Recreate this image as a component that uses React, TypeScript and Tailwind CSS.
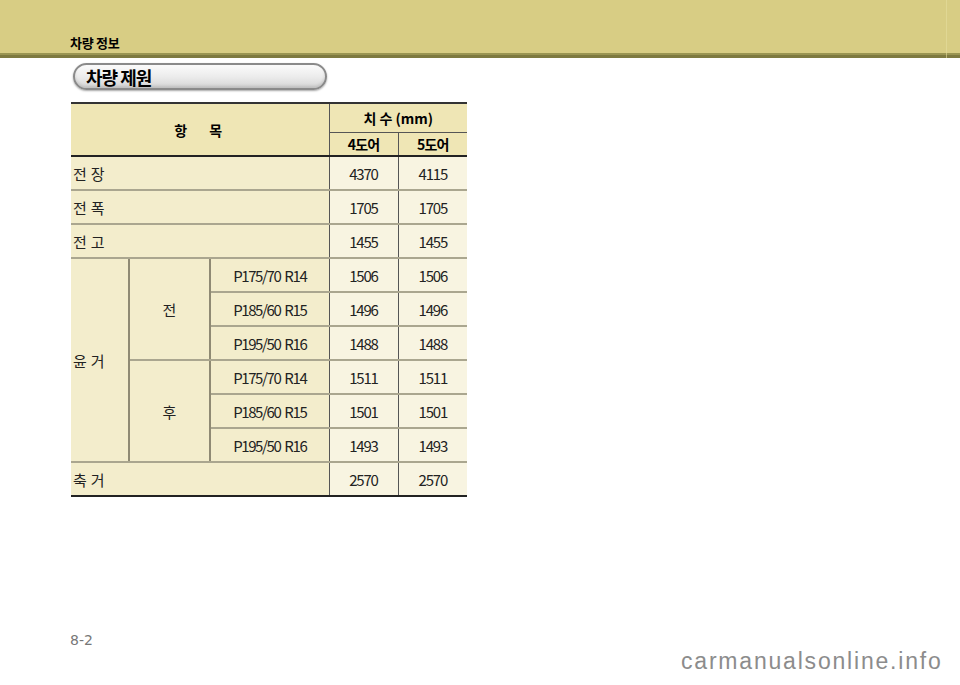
const font = "font-['Noto_Sans_CJK_KR','Noto_Sans',sans-serif]";

const front = [
  { tire: "P175/70 R14", a: "1506", b: "1506" },
  { tire: "P185/60 R15", a: "1496", b: "1496" },
  { tire: "P195/50 R16", a: "1488", b: "1488" },
];
const rear = [
  { tire: "P175/70 R14", a: "1511", b: "1511" },
  { tire: "P185/60 R15", a: "1501", b: "1501" },
  { tire: "P195/50 R16", a: "1493", b: "1493" },
];

const rowLine = "border-b-2 border-[#aaa68f]";
const leftBg = "bg-[#f3edcc]";
const numBg = "bg-[#f8f4e1]";
const num = "text-center text-[15px] tracking-[-1.2px]";
const kor = "pl-[2px] text-left text-[15px] tracking-[4px]";

function SimpleRow({ label, a, b, last }: { label: string; a: string; b: string; last?: boolean }) {
  const line = last ? "border-b-2 border-[#222]" : rowLine;
  return (
    <tr className="h-[34px]">
      <td colSpan={3} className={`${leftBg} ${line} border-r border-r-[#555] ${kor}`}>
        {label}
      </td>
      <td className={`${numBg} ${line} border-r border-r-[#555] ${num}`}>{a}</td>
      <td className={`${numBg} ${line} ${num}`}>{b}</td>
    </tr>
  );
}

export default function App() {
  return (
    <div className={`w-[960px] h-[685px] bg-white relative overflow-hidden ${font}`}>
      <div className="h-[53px] bg-[#d8cd84] flex items-end pl-[70px] pb-[4px]">
        <span className="text-[13px] font-bold text-black leading-none tracking-[-0.3px]">차량 정보</span>
      </div>
      <div className="h-[2px] bg-[#9a9552]" />
      <div className="h-[3px] bg-[#7e7a40]" />
      <div className="absolute top-0 left-[946px] w-px h-[58px] bg-[#e6dd9e] opacity-60" />

      <div className="ml-[73px] mt-[5px] w-[254px] h-[27px] rounded-full border-2 border-[#8a8a8a] bg-gradient-to-b from-[#fbfbfb] via-[#ececec] to-[#d6d6d6] shadow-[0_1px_2px_rgba(0,0,0,0.35),inset_0_-2px_3px_rgba(0,0,0,0.12)] flex items-center pl-[11px]">
        <span className="text-[18px] font-bold text-black leading-none tracking-[-1px]">차량 제원</span>
      </div>

      <table className="ml-[71px] mt-[12px] w-[396px] table-fixed border-collapse text-[13px] text-[#222] leading-none">
        <colgroup>
          <col className="w-[58px]" />
          <col className="w-[81px]" />
          <col className="w-[119px]" />
          <col className="w-[69px]" />
          <col className="w-[69px]" />
        </colgroup>
        <thead>
          <tr className="h-[29px]">
            <th
              colSpan={3}
              rowSpan={2}
              className="bg-[#efe6b5] border-t-2 border-t-[#333] border-b-2 border-b-[#222] border-r border-r-[#555] font-bold text-black text-[14px]"
            >
              <span className="inline-flex gap-[22px] -ml-[3px]">
                <span>항</span>
                <span>목</span>
              </span>
            </th>
            <th colSpan={2} className="bg-[#efe6b5] border-t-2 border-t-[#333] border-b border-b-[#555] font-bold text-black text-[14px]">
              치 수 (mm)
            </th>
          </tr>
          <tr className="h-[24px]">
            <th className="bg-[#efe6b5] border-b-2 border-b-[#222] border-r border-r-[#555] font-bold text-black text-[14px] tracking-[-0.8px]">4도어</th>
            <th className="bg-[#efe6b5] border-b-2 border-b-[#222] font-bold text-black text-[14px] tracking-[-0.8px]">5도어</th>
          </tr>
        </thead>
        <tbody>
          <SimpleRow label="전장" a="4370" b="4115" />
          <SimpleRow label="전폭" a="1705" b="1705" />
          <SimpleRow label="전고" a="1455" b="1455" />
          {[...front, ...rear].map((r, i) => (
            <tr key={i} className="h-[34px]">
              {i === 0 && (
                <td rowSpan={6} className={`${leftBg} ${rowLine} border-r-2 border-r-[#8f8a74] ${kor}`}>
                  윤거
                </td>
              )}
              {(i === 0 || i === 3) && (
                <td rowSpan={3} className={`${leftBg} ${rowLine} border-r-2 border-r-[#8f8a74] text-center text-[15px]`}>
                  {i === 0 ? "전" : "후"}
                </td>
              )}
              <td className={`${leftBg} ${rowLine} border-r border-r-[#555] text-center text-[15px] tracking-[-1.4px] [word-spacing:2px]`}>{r.tire}</td>
              <td className={`${numBg} ${rowLine} border-r border-r-[#555] ${num}`}>{r.a}</td>
              <td className={`${numBg} ${rowLine} ${num}`}>{r.b}</td>
            </tr>
          ))}
          <SimpleRow label="축거" a="2570" b="2570" last />
        </tbody>
      </table>

      <div className="absolute left-[70px] top-[633px] text-[14px] text-[#777] font-['DejaVu_Sans',sans-serif] leading-none">8-2</div>
      <div className="absolute left-[681px] top-[650px] text-[23px] tracking-[1.8px] text-[#8c8c8c] font-['Liberation_Sans',sans-serif] leading-none">
        carmanualsonline.info
      </div>
    </div>
  );
}
